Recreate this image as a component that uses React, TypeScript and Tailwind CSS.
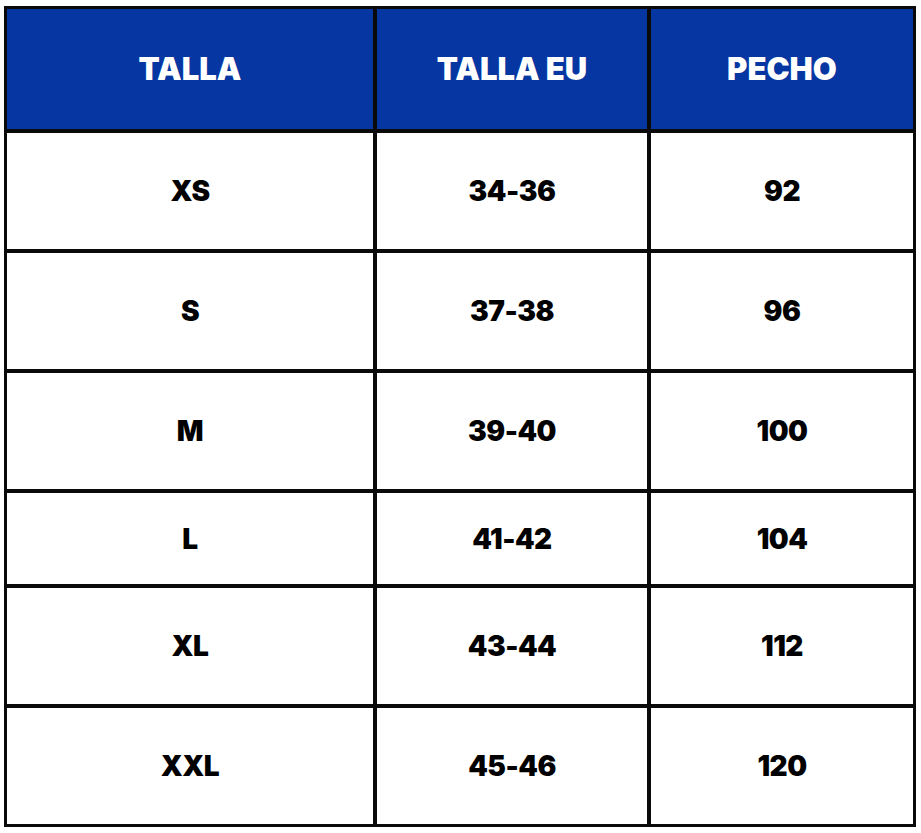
const HEAD = ['TALLA', 'TALLA EU', 'PECHO']

const ROWS = [
  ['XS', '34-36', '92'],
  ['S', '37-38', '96'],
  ['M', '39-40', '100'],
  ['L', '41-42', '104'],
  ['XL', '43-44', '112'],
  ['XXL', '45-46', '120'],
]

export default function App() {
  return (
    <div className="min-h-screen bg-white pl-[4px] pt-[6px]" style={{ fontFamily: 'Inter, "Noto Sans", sans-serif' }}>
      <div className="inline-grid grid-cols-[366px_270px_262px] grid-rows-[120px_116px_116px_116px_91px_116px_116px] gap-[4px] bg-[#0a0a0a] p-[3px]">
        {HEAD.map((h) => (
          <div key={h} className="flex items-center justify-center bg-[#0536a1] text-[31px] font-black tracking-normal text-white">
            {h}
          </div>
        ))}
        {ROWS.map((row) =>
          row.map((cell, i) => (
            <div key={row[0] + i} className="flex items-center justify-center bg-white text-[28px] font-black tracking-[-0.5px] text-black">
              {cell}
            </div>
          ))
        )}
      </div>
    </div>
  )
}
